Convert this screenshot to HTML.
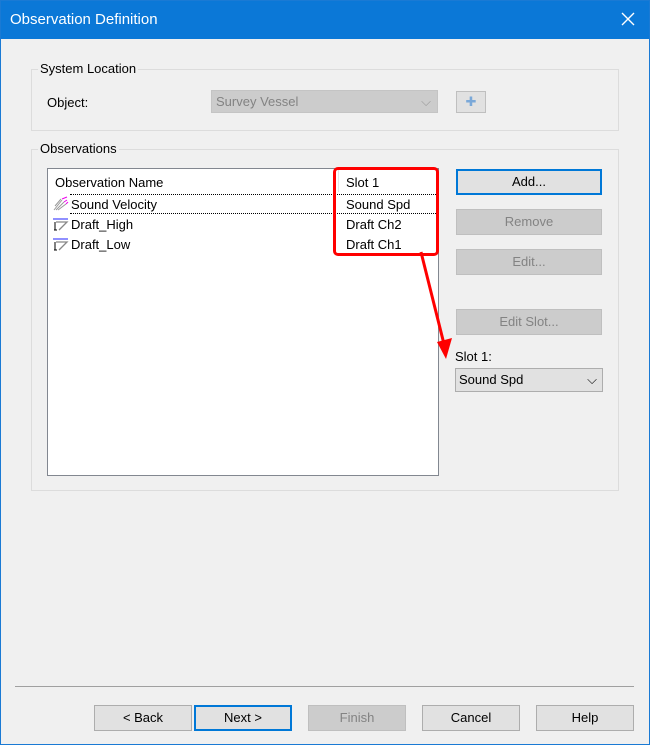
<!DOCTYPE html><html><head><style>
body{margin:0;width:650px;height:745px;overflow:hidden;font-family:"Liberation Sans",sans-serif;font-size:13px;}
.win{position:absolute;left:0;top:0;width:650px;height:745px;background:#f0f0f0;}
.bord{position:absolute;left:0;top:0;width:648px;height:743px;border:1px solid #1a7ad4;}
.title{position:absolute;left:0;top:0;width:650px;height:39px;background:#0b78d7;color:#fff;font-size:15px;}
.a{position:absolute;}
.grp{position:absolute;border:1px solid #dcdcdc;}
.btn{position:absolute;background:#e1e1e1;border:1px solid #adadad;text-align:center;line-height:24px;box-sizing:border-box;height:26px;}
.dis{background:#cccccc;border-color:#bfbfbf;color:#838383;}
</style></head><body><div class="win">
<div class="title"><span class="a" style="left:10px;top:11px">Observation Definition</span>
<svg class="a" style="left:621px;top:12px" width="14" height="14"><path d="M1 1L13 13M13 1L1 13" stroke="#fff" stroke-width="1.4"/></svg></div>
<div class="grp" style="left:31px;top:69px;width:586px;height:60px"></div>
<span class="a" style="left:38px;top:61px;background:#f0f0f0;padding:0 2px">System Location</span>
<span class="a" style="left:47px;top:95px">Object:</span>
<div class="a" style="left:211px;top:90px;width:227px;height:23px;background:#ccc;border:1px solid #c4c4c4;color:#838383;box-sizing:border-box;line-height:21px;padding-left:4px">Survey Vessel<span style="position:absolute;right:6px;color:#999">⌵</span></div>
<div class="btn dis" style="left:456px;top:91px;width:30px;height:22px;line-height:20px;color:#7aa8d8;background:#e1e1e1">✚</div>
<div class="grp" style="left:31px;top:149px;width:586px;height:340px"></div>
<span class="a" style="left:38px;top:141px;background:#f0f0f0;padding:0 2px">Observations</span>
<div class="a" style="left:47px;top:168px;width:390px;height:306px;background:#fff;border:1px solid #828790"></div>
<span class="a" style="left:55px;top:175px">Observation Name</span>
<div class="a" style="left:338px;top:170px;width:1px;height:22px;background:#e5e5e5"></div>
<span class="a" style="left:346px;top:175px">Slot 1</span>
<div class="a" style="left:70px;top:194px;width:366px;height:18px;border-top:1px dotted #000;border-bottom:1px dotted #000"></div>
<span class="a" style="left:71px;top:197px">Sound Velocity</span><span class="a" style="left:346px;top:197px">Sound Spd</span>
<span class="a" style="left:71px;top:217px">Draft_High</span><span class="a" style="left:346px;top:217px">Draft Ch2</span>
<span class="a" style="left:71px;top:237px">Draft_Low</span><span class="a" style="left:346px;top:237px">Draft Ch1</span>
<svg class="a" style="left:52px;top:196px" width="18" height="62"><path d="M2 14L10 4M4 14L12 6M6 14L14 8M3 10L9 3" stroke="#999" stroke-width="1"/><path d="M10 3L15 1M12 6L15 4M14 8L16 6" stroke="#e0e" stroke-width="1"/>
<path d="M1 23H16" stroke="#22f"/><path d="M4 26H15L7 34" stroke="#888" stroke-width="1.3" fill="none"/><path d="M3 26V34M2 34H5" stroke="#000"/><path d="M1 43H16" stroke="#22f"/><path d="M4 46H15L7 54" stroke="#888" stroke-width="1.3" fill="none"/><path d="M3 46V54M2 54H5" stroke="#000"/></svg>
<div class="a" style="left:333px;top:167px;width:100px;height:83px;border:3px solid #f00;border-radius:5px"></div>
<svg class="a" style="left:410px;top:248px" width="50" height="120"><path d="M11 4L34 96" stroke="#f00" stroke-width="3"/><path d="M27 94L36 111L42 90Z" fill="#f00"/></svg>
<div class="btn" style="left:456px;top:169px;width:146px;height:26px;border:2px solid #0078d7;line-height:22px">Add...</div>
<div class="btn dis" style="left:456px;top:209px;width:146px">Remove</div>
<div class="btn dis" style="left:456px;top:249px;width:146px">Edit...</div>
<div class="btn dis" style="left:456px;top:309px;width:146px">Edit Slot...</div>
<span class="a" style="left:455px;top:349px">Slot 1:</span>
<div class="a" style="left:455px;top:368px;width:148px;height:24px;background:#e1e1e1;border:1px solid #adadad;box-sizing:border-box;line-height:22px;padding-left:3px">Sound Spd<span style="position:absolute;right:5px;">⌵</span></div>
<div class="a" style="left:15px;top:686px;width:619px;height:1px;background:#a0a0a0"></div>
<div class="btn" style="left:94px;top:705px;width:98px">&lt; Back</div>
<div class="btn" style="left:194px;top:705px;width:98px;border:2px solid #0078d7;line-height:22px">Next &gt;</div>
<div class="btn dis" style="left:308px;top:705px;width:98px">Finish</div>
<div class="btn" style="left:422px;top:705px;width:98px">Cancel</div>
<div class="btn" style="left:536px;top:705px;width:98px">Help</div>
<div class="bord"></div>
</div></body></html>
